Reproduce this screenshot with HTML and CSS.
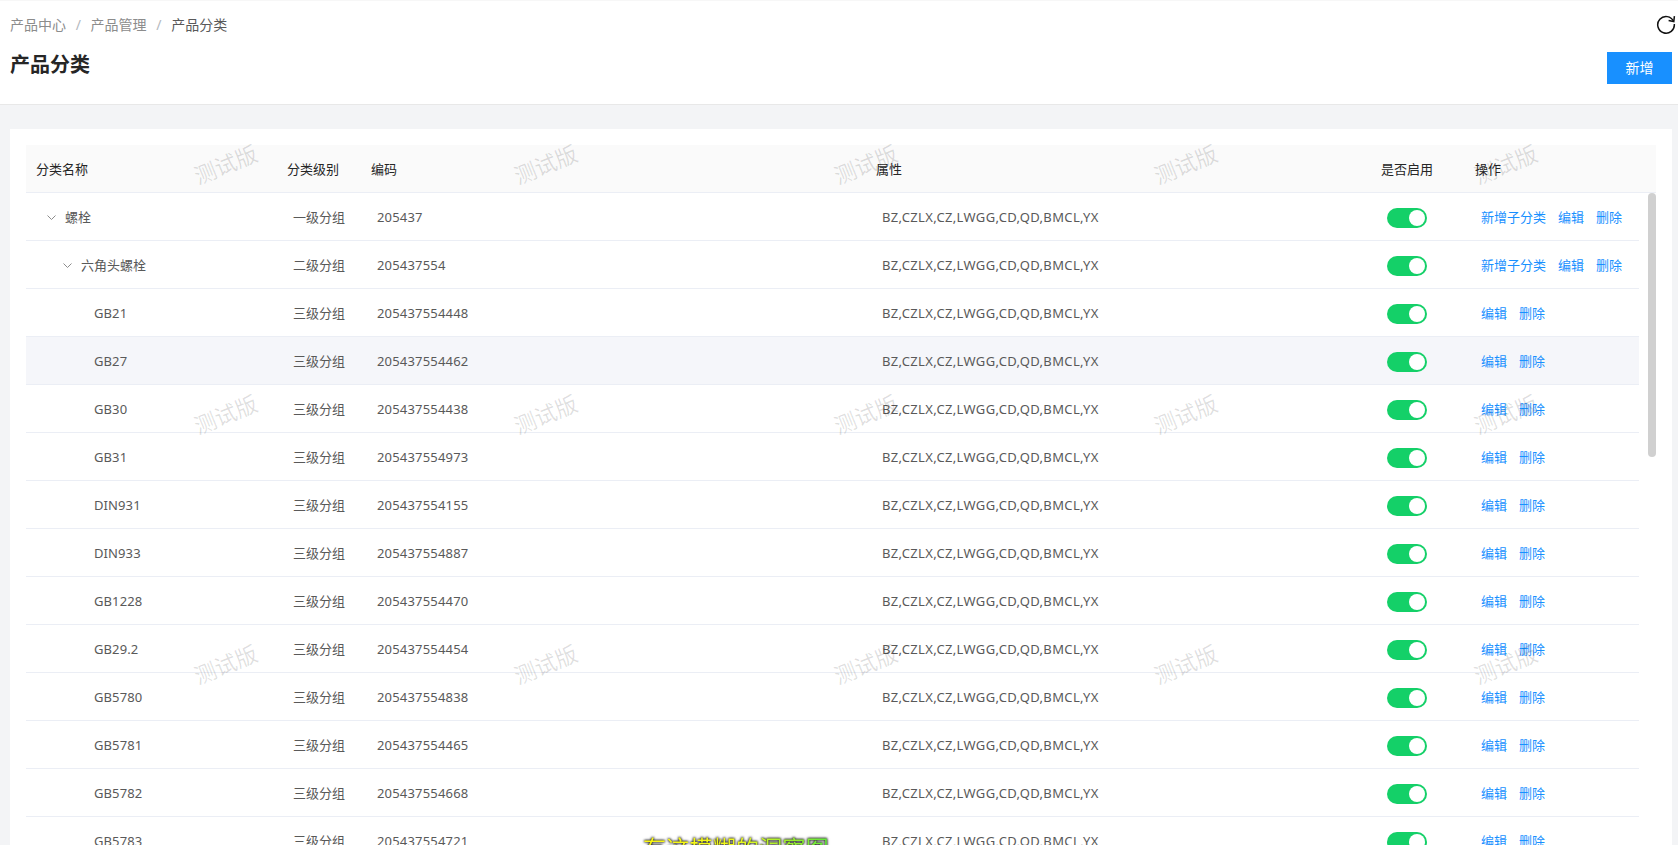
FILE: index.html
```html
<!DOCTYPE html>
<html>

	<head>
		<meta charset="UTF-8">
		<title>产品分类</title>
		<link rel="stylesheet" href="styles.css">
	</head>

	<body>
		<div class="page">
			<div class="head">
				<div class="head-top">
					<div class="crumb">
						<span>产品中心</span><i>/</i><span>产品管理</span><i>/</i><span class="cur">产品分类</span>
					</div>
					<svg class="refresh" width="20" height="20" viewBox="0 0 20 20">
						<path d="M17.6 7.4A8.3 8.3 0 1 0 18.3 10" />
						<path d="M12.6 6.6L17.8 7.6L18.4 2.2" />
					</svg>
				</div>
				<div class="head-bottom">
					<h1>产品分类</h1>
					<a class="btn" href="#">新增</a>
				</div>
			</div>
			<div class="main">
				<div class="card">
					<div class="row thead">
						<div>分类名称</div>
						<div>分类级别</div>
						<div>编码</div>
						<div>属性</div>
						<div>是否启用</div>
						<div>操作</div>
					</div>
					<div class="tbody">
						<div class="rows">
							<div class="row">
								<div class="name lv1"><svg class="arrow" width="9" height="5" viewBox="0 0 9 5"><path d="M.5 .5L4.5 4.5L8.5 .5" /></svg>螺栓</div>
								<div>一级分组</div>
								<div class="code">205437</div>
								<div class="attr">BZ,CZLX,CZ,LWGG,CD,QD,BMCL,YX</div>
								<div><span class="switch"></span></div>
								<div class="ops"><a href="#">新增子分类</a><a href="#">编辑</a><a href="#">删除</a></div>
							</div>
							<div class="row">
								<div class="name lv2"><svg class="arrow" width="9" height="5" viewBox="0 0 9 5"><path d="M.5 .5L4.5 4.5L8.5 .5" /></svg>六角头螺栓</div>
								<div>二级分组</div>
								<div class="code">205437554</div>
								<div class="attr">BZ,CZLX,CZ,LWGG,CD,QD,BMCL,YX</div>
								<div><span class="switch"></span></div>
								<div class="ops"><a href="#">新增子分类</a><a href="#">编辑</a><a href="#">删除</a></div>
							</div>
							<div class="row">
								<div class="name lv3">GB21</div>
								<div>三级分组</div>
								<div class="code">205437554448</div>
								<div class="attr">BZ,CZLX,CZ,LWGG,CD,QD,BMCL,YX</div>
								<div><span class="switch"></span></div>
								<div class="ops"><a href="#">编辑</a><a href="#">删除</a></div>
							</div>
							<div class="row hover">
								<div class="name lv3">GB27</div>
								<div>三级分组</div>
								<div class="code">205437554462</div>
								<div class="attr">BZ,CZLX,CZ,LWGG,CD,QD,BMCL,YX</div>
								<div><span class="switch"></span></div>
								<div class="ops"><a href="#">编辑</a><a href="#">删除</a></div>
							</div>
							<div class="row">
								<div class="name lv3">GB30</div>
								<div>三级分组</div>
								<div class="code">205437554438</div>
								<div class="attr">BZ,CZLX,CZ,LWGG,CD,QD,BMCL,YX</div>
								<div><span class="switch"></span></div>
								<div class="ops"><a href="#">编辑</a><a href="#">删除</a></div>
							</div>
							<div class="row">
								<div class="name lv3">GB31</div>
								<div>三级分组</div>
								<div class="code">205437554973</div>
								<div class="attr">BZ,CZLX,CZ,LWGG,CD,QD,BMCL,YX</div>
								<div><span class="switch"></span></div>
								<div class="ops"><a href="#">编辑</a><a href="#">删除</a></div>
							</div>
							<div class="row">
								<div class="name lv3">DIN931</div>
								<div>三级分组</div>
								<div class="code">205437554155</div>
								<div class="attr">BZ,CZLX,CZ,LWGG,CD,QD,BMCL,YX</div>
								<div><span class="switch"></span></div>
								<div class="ops"><a href="#">编辑</a><a href="#">删除</a></div>
							</div>
							<div class="row">
								<div class="name lv3">DIN933</div>
								<div>三级分组</div>
								<div class="code">205437554887</div>
								<div class="attr">BZ,CZLX,CZ,LWGG,CD,QD,BMCL,YX</div>
								<div><span class="switch"></span></div>
								<div class="ops"><a href="#">编辑</a><a href="#">删除</a></div>
							</div>
							<div class="row">
								<div class="name lv3">GB1228</div>
								<div>三级分组</div>
								<div class="code">205437554470</div>
								<div class="attr">BZ,CZLX,CZ,LWGG,CD,QD,BMCL,YX</div>
								<div><span class="switch"></span></div>
								<div class="ops"><a href="#">编辑</a><a href="#">删除</a></div>
							</div>
							<div class="row">
								<div class="name lv3">GB29.2</div>
								<div>三级分组</div>
								<div class="code">205437554454</div>
								<div class="attr">BZ,CZLX,CZ,LWGG,CD,QD,BMCL,YX</div>
								<div><span class="switch"></span></div>
								<div class="ops"><a href="#">编辑</a><a href="#">删除</a></div>
							</div>
							<div class="row">
								<div class="name lv3">GB5780</div>
								<div>三级分组</div>
								<div class="code">205437554838</div>
								<div class="attr">BZ,CZLX,CZ,LWGG,CD,QD,BMCL,YX</div>
								<div><span class="switch"></span></div>
								<div class="ops"><a href="#">编辑</a><a href="#">删除</a></div>
							</div>
							<div class="row">
								<div class="name lv3">GB5781</div>
								<div>三级分组</div>
								<div class="code">205437554465</div>
								<div class="attr">BZ,CZLX,CZ,LWGG,CD,QD,BMCL,YX</div>
								<div><span class="switch"></span></div>
								<div class="ops"><a href="#">编辑</a><a href="#">删除</a></div>
							</div>
							<div class="row">
								<div class="name lv3">GB5782</div>
								<div>三级分组</div>
								<div class="code">205437554668</div>
								<div class="attr">BZ,CZLX,CZ,LWGG,CD,QD,BMCL,YX</div>
								<div><span class="switch"></span></div>
								<div class="ops"><a href="#">编辑</a><a href="#">删除</a></div>
							</div>
							<div class="row">
								<div class="name lv3">GB5783</div>
								<div>三级分组</div>
								<div class="code">205437554721</div>
								<div class="attr">BZ,CZLX,CZ,LWGG,CD,QD,BMCL,YX</div>
								<div><span class="switch"></span></div>
								<div class="ops"><a href="#">编辑</a><a href="#">删除</a></div>
							</div>
						</div>
						<div class="scrollbar"><div class="thumb"></div></div>
					</div>
				</div>
			</div>
			<!-- 水印 -->
			<div class="marks">
				<span>测试版</span><span>测试版</span><span>测试版</span><span>测试版</span><span>测试版</span>
				<span>测试版</span><span>测试版</span><span>测试版</span><span>测试版</span><span>测试版</span>
				<span>测试版</span><span>测试版</span><span>测试版</span><span>测试版</span><span>测试版</span>
			</div>
			<div class="caption">有这模糊的洞察图</div>
		</div>
	</body>

</html>
```

FILE: styles.css
```css
* {
	margin: 0;
	padding: 0;
	box-sizing: border-box;
}

html,
body {
	height: 100%;
	overflow: hidden;
}

body {
	font-family: "Noto Sans", "Noto Sans CJK SC", sans-serif;
	font-size: 13px;
	color: #595959;
	background: #f3f4f6;
}

a {
	color: #1890ff;
	text-decoration: none;
}

.page {
	position: relative;
	height: 845px;
	overflow: hidden;
}

.head {
	height: 105px;
	padding: 2px 2px 0 10px;
	background: #fff;
	border-top: 1px solid #f7f7f7;
	border-bottom: 1px solid #e8e8e8;
}

.head-top {
	display: flex;
	justify-content: space-between;
	align-items: center;
	height: 34px;
	padding-top: 8px;
}

.crumb {
	font-size: 14px;
	color: #8c8c8c;
}

.crumb i {
	margin: 0 9.7px;
	font-style: normal;
	color: #b4b9c0;
}

.crumb .cur {
	color: #595959;
}

.refresh {
	flex: none;
	fill: none;
	stroke: #111;
	stroke-width: 1.5;
}

.head-bottom {
	display: flex;
	justify-content: space-between;
	align-items: flex-start;
	padding-right: 4px;
	padding-top: 14px;
}

.head-bottom h1 {
	font-size: 20px;
	font-weight: 600;
	line-height: 28px;
	color: #262626;
}

.btn {
	display: block;
	width: 65px;
	height: 32px;
	margin-top: 1px;
	line-height: 32px;
	text-align: center;
	font-size: 14px;
	color: #fff;
	background: #1890ff;
}

.main {
	padding: 24px 6px 0 10px;
}

.card {
	padding: 16px;
	background: #fff;
	height: 800px;
}

.row {
	display: grid;
	grid-template-columns: 251px 84px 505px 505px 94px 1fr;
	height: 48px;
	align-items: center;
	border-bottom: 1px solid #ebeef5;
}

.row > div {
	padding-left: 16px;
	white-space: nowrap;
}

.thead {
	color: #262626;
	background: #fafafa;
}

.thead > div {
	padding-left: 10px;
}

.tbody {
	display: flex;
}

.rows {
	flex: 1;
}

.scrollbar {
	flex: none;
	width: 17px;
	padding-left: 9px;
}

.thumb {
	height: 264px;
	border-radius: 4px;
	background: #d0d0d0;
}

.hover {
	background: #f5f6fa;
}

.row > .lv1 {
	padding-left: 21px;
}

.row > .lv2 {
	padding-left: 37px;
}

.row > .lv3 {
	padding-left: 68px;
	letter-spacing: 0.1px;
}

.code {
	letter-spacing: 0.18px;
}

.attr {
	letter-spacing: 0.35px;
}

.arrow {
	margin-right: 9px;
	vertical-align: 2px;
	fill: none;
	stroke: #8c8c8c;
	stroke-width: 1;
}

.switch {
	display: flex;
	justify-content: flex-end;
	width: 40px;
	height: 20px;
	margin-top: 3px;
	padding: 2px;
	border-radius: 10px;
	background: #14d068;
}

.switch::after {
	content: "";
	width: 16px;
	height: 16px;
	border-radius: 50%;
	background: #fff;
}

.ops {
	display: flex;
	gap: 12px;
}

.marks {
	position: absolute;
	left: 65px;
	top: 38px;
	display: grid;
	grid-template-columns: repeat(5, 320px);
	grid-auto-rows: 250px;
	place-items: center;
	pointer-events: none;
}

.marks span {
	font-size: 22px;
	color: rgba(0, 0, 0, 0.13);
	transform: rotate(-22deg);
}

.caption {
	position: absolute;
	left: 643px;
	top: 832px;
	font-size: 23px;
	line-height: 32px;
	letter-spacing: 0.25px;
	white-space: nowrap;
	background: linear-gradient(90deg, #fbf70f, #eef81f 50%, #5fe83a);
	-webkit-background-clip: text;
	background-clip: text;
	color: transparent;
	filter: drop-shadow(0 0 1px #222) drop-shadow(0 0 1px #555);
}
```
